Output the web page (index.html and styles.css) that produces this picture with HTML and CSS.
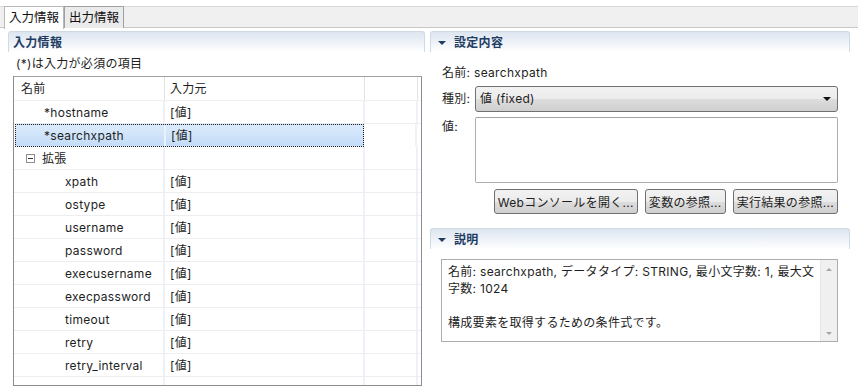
FILE: index.html
```html
<!DOCTYPE html>
<html lang="ja">
<head>
  <meta charset="UTF-8" />
  <title>入力情報</title>
  <link rel="stylesheet" href="styles.css">
</head>
<body>

  <div class="tabs">
    <div class="tab active">入力情報</div>
    <div class="tab">出力情報</div>
  </div>

  <div class="main">
    <section class="left">
      <div class="sec-head">入力情報</div>
      <div class="note">(*)は入力が必須の項目</div>

      <div class="table">
        <div class="row head">
          <div class="cell c1">名前</div>
          <div class="cell c2">入力元</div>
          <div class="cell c3"></div>
        </div>
        <div class="row">
          <div class="cell c1 lv1">*hostname</div>
          <div class="cell c2">[値]</div>
          <div class="cell c3"></div>
        </div>
        <div class="row selected">
          <div class="sel">
            <div class="cell c1 lv1">*searchxpath</div>
            <div class="cell c2">[値]</div>
          </div>
          <div class="cell c3"></div>
        </div>
        <div class="row">
          <div class="cell c1 group"><span class="toggle"></span>拡張</div>
          <div class="cell c2"></div>
          <div class="cell c3"></div>
        </div>
        <div class="row">
          <div class="cell c1 lv2">xpath</div>
          <div class="cell c2">[値]</div>
          <div class="cell c3"></div>
        </div>
        <div class="row">
          <div class="cell c1 lv2">ostype</div>
          <div class="cell c2">[値]</div>
          <div class="cell c3"></div>
        </div>
        <div class="row">
          <div class="cell c1 lv2">username</div>
          <div class="cell c2">[値]</div>
          <div class="cell c3"></div>
        </div>
        <div class="row">
          <div class="cell c1 lv2">password</div>
          <div class="cell c2">[値]</div>
          <div class="cell c3"></div>
        </div>
        <div class="row">
          <div class="cell c1 lv2">execusername</div>
          <div class="cell c2">[値]</div>
          <div class="cell c3"></div>
        </div>
        <div class="row">
          <div class="cell c1 lv2">execpassword</div>
          <div class="cell c2">[値]</div>
          <div class="cell c3"></div>
        </div>
        <div class="row">
          <div class="cell c1 lv2">timeout</div>
          <div class="cell c2">[値]</div>
          <div class="cell c3"></div>
        </div>
        <div class="row">
          <div class="cell c1 lv2">retry</div>
          <div class="cell c2">[値]</div>
          <div class="cell c3"></div>
        </div>
        <div class="row">
          <div class="cell c1 lv2">retry_interval</div>
          <div class="cell c2">[値]</div>
          <div class="cell c3"></div>
        </div>
        <div class="row tail">
          <div class="cell c1"></div>
          <div class="cell c2"></div>
          <div class="cell c3"></div>
        </div>
      </div>
    </section>

    <section class="right">
      <div class="sec-head"><span class="tri"></span>設定内容</div>
      <div class="form">
        <div class="line name">
          <span class="label">名前:</span><span>&nbsp;searchxpath</span>
        </div>
        <div class="line">
          <span class="label">種別:</span>
          <div class="combo">値 (fixed)<span class="arrow"></span></div>
        </div>
        <div class="line top">
          <span class="label">値:</span>
          <div class="textbox"></div>
        </div>
        <div class="buttons">
          <button>Webコンソールを開く...</button>
          <button>変数の参照...</button>
          <button>実行結果の参照...</button>
        </div>
      </div>

      <div class="sec-head"><span class="tri"></span>説明</div>
      <div class="desc">
        <div class="desc-text">
          名前: searchxpath, データタイプ: STRING, 最小文字数: 1, 最大文字数: 1024<br><br>
          構成要素を取得するための条件式です。
        </div>
        <div class="scroll">
          <span class="up"></span>
          <span class="down"></span>
        </div>
      </div>
    </section>
  </div>

</body>
</html>
```

FILE: styles.css
```css
* {
  box-sizing: border-box;
  margin: 0;
  padding: 0;
}

body {
  background: #fff;
  font-family: "Inter", "Noto Sans CJK JP", sans-serif;
  font-size: 12px;
  letter-spacing: 0.3px;
  color: #1e1e1e;
  width: 858px;
  height: 391px;
  overflow: hidden;
}

/* タブ */
.tabs {
  margin-top: 6px;
  height: 22px;
  background: #f0f0f0;
  border-top: 1px solid #d9d9d9;
  border-bottom: 1px solid #c8c8c8;
  display: flex;
  padding-left: 4px;
}

.tab {
  height: 22px;
  margin-top: -1px;
  padding: 0 4px;
  line-height: 21px;
  font-size: 12.5px;
  letter-spacing: 0;
  border: 1px solid #a0a0a0;
  border-bottom: none;
  background: #ebebeb;
  color: #111;
}

.tab.active {
  background: #fff;
  height: 23px;
  border-color: #b8b8b8;
}

.main {
  display: flex;
  padding: 3px 8px 0 8px;
  gap: 5px;
}

.sec-head {
  height: 21px;
  line-height: 21px;
  padding-left: 4px;
  font-weight: bold;
  color: #1f3c63;
  background: linear-gradient(#dce5f0, #fff);
  border: 1px solid #cfdae7;
  border-bottom: none;
  border-radius: 3px 3px 0 0;
  display: flex;
  align-items: center;
}

/* 左側 */
.left {
  width: 417px;
}

.note {
  padding-left: 8px;
  height: 24px;
  line-height: 24px;
}

.table {
  margin-left: 5px;
  width: 409px;
  height: 310px;
  border: 1px solid #8c8c8c;
  border-top-color: #a0a0a0;
  overflow: hidden;
}

.row {
  display: flex;
  height: 23px;
  border-bottom: 1px solid #eceef2;
}

.row.head {
  height: 24px;
  border-bottom: 1px solid #f0f0f0;
}

.row.tail {
  border-bottom: none;
  height: 8px;
}

.cell {
  line-height: 23px;
  white-space: nowrap;
  border-right: 2px solid #eef2f8;
}

.head .cell {
  border-right: 1px solid #e3e3e3;
  line-height: 23px;
}

.c1 {
  width: 151px;
  padding-left: 7px;
}

.c2 {
  width: 200px;
  padding-left: 5px;
}

.c3 {
  width: 53px;
}

.lv1 {
  padding-left: 30px;
}

.lv2 {
  padding-left: 51px;
}

.group {
  display: flex;
  align-items: center;
  padding-left: 12px;
  gap: 7px;
}

.toggle {
  width: 9px;
  height: 9px;
  border: 1px solid #8f8f8f;
  position: relative;
}

.toggle::after {
  content: "";
  position: absolute;
  left: 1px;
  top: 3px;
  width: 5px;
  height: 1px;
  background: #333;
}

.row.selected {
  border-bottom: none;
}

.sel {
  display: flex;
  margin-left: 1px;
  width: 349px;
  height: 23px;
  background: linear-gradient(#dcebfc, #c3dcf8);
  border: 1px dotted #222;
}

.sel .cell {
  line-height: 22px;
  border-right: none;
}

.sel .c1 {
  width: 150px;
  padding-left: 28px;
  border-right: 2px solid #eef2f8;
}

.sel .c2 {
  width: 197px;
}

/* 右側 */
.right {
  width: 420px;
}

.tri {
  width: 0;
  height: 0;
  border-left: 4px solid transparent;
  border-right: 4px solid transparent;
  border-top: 4px solid #1f3c63;
  margin: 1px 8px 0 3px;
}

.form {
  padding: 9px 12px 14px 12px;
  display: flex;
  flex-direction: column;
}

.line {
  display: flex;
  align-items: center;
  line-height: 18px;
  margin-bottom: 5px;
}

.line.name {
  height: 20px;
  padding-top: 3px;
  margin-bottom: 5px;
}

.line.top {
  align-items: flex-start;
  margin-bottom: 6px;
}

.line.top .label {
  padding-top: 1px;
}

.label {
  width: 33px;
}

.name .label {
  width: auto;
}

.combo {
  width: 363px;
  height: 26px;
  line-height: 24px;
  padding-left: 4px;
  border: 1px solid #707070;
  border-radius: 3px;
  background: linear-gradient(#f2f2f2 0%, #ebebeb 50%, #dddddd 51%, #cfcfcf 100%);
  position: relative;
}

.arrow {
  position: absolute;
  right: 6px;
  top: 10px;
  border-left: 4px solid transparent;
  border-right: 4px solid transparent;
  border-top: 4px solid #111;
}

.textbox {
  width: 363px;
  height: 66px;
  border: 1px solid #abadb3;
  border-top-color: #a0a0a0;
  border-radius: 2px;
  background: #fff;
}

.buttons {
  display: flex;
  justify-content: flex-end;
  gap: 7px;
}

button {
  font-family: inherit;
  font-size: 12px;
  letter-spacing: 0.3px;
  color: #1e1e1e;
  height: 25px;
  padding: 0 3px;
  border: 1px solid #707070;
  border-radius: 3px;
  background: linear-gradient(#f2f2f2 0%, #ebebeb 50%, #dddddd 51%, #cfcfcf 100%);
}

.desc {
  margin: 10px 12px 0 11px;
  height: 83px;
  border: 1px solid #abadb3;
  display: flex;
}

.desc-text {
  flex: 1;
  padding: 3px 1px 3px 6px;
  line-height: 17px;
}

.scroll {
  width: 17px;
  background: #f0f0f0;
  border-left: 1px solid #e6e6e6;
  display: flex;
  flex-direction: column;
  justify-content: space-between;
  align-items: center;
  padding: 8px 0 6px;
}

.up {
  border-left: 3px solid transparent;
  border-right: 3px solid transparent;
  border-bottom: 3px solid #a5a5a5;
}

.down {
  border-left: 3px solid transparent;
  border-right: 3px solid transparent;
  border-top: 3px solid #a5a5a5;
}
```
